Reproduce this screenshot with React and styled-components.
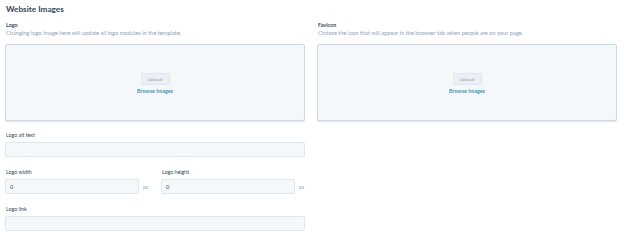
import React from "react";
import styled, { createGlobalStyle } from "styled-components";

const GlobalStyle = createGlobalStyle`
  body {
    margin: 0;
    background: #ffffff;
    font-family: Lato, "Liberation Sans", sans-serif;
    color: #33475b;
  }
`;

const Page = styled.div`
  width: 624px;
  height: 246px;
  box-sizing: border-box;
  padding: 3px 7px 0 5px;
  overflow: hidden;
`;

const Title = styled.h1`
  margin: 0 0 0 1px;
  font-size: 8.2px;
  line-height: 12px;
  font-weight: 700;
  color: #33475b;
`;

const Columns = styled.div`
  display: flex;
  gap: 12px;
  margin-top: 6px;
`;

const Column = styled.div`
  width: 300px;
  display: flex;
  flex-direction: column;
`;

const SectionLabel = styled.div`
  margin-left: 1px;
  font-size: 5.4px;
  line-height: 8px;
  font-weight: 700;
  color: #33475b;
`;

const Help = styled.div`
  margin-left: 1px;
  font-size: 5.7px;
  line-height: 8px;
  color: #8fa4b8;
`;

const Dropzone = styled.div`
  margin-top: 7px;
  height: 77px;
  box-sizing: border-box;
  border: 1px solid #cfd9e3;
  border-radius: 2px;
  background: #f5f8fa;
  box-shadow: 0 1px 1px rgba(203, 214, 226, 0.6);
  display: flex;
  flex-direction: column;
  align-items: center;
  justify-content: center;
  gap: 3px;
  padding-top: 2px;
`;

const UploadButton = styled.button`
  width: 29px;
  height: 12px;
  padding: 0;
  border: 1px solid #e1e7ee;
  border-radius: 2px;
  background: #eaf0f6;
  font-family: inherit;
  font-size: 4.6px;
  color: #8fa4b8;
`;

const BrowseLink = styled.a`
  font-size: 5.4px;
  line-height: 7px;
  font-weight: 600;
  color: #2d8ea6;
  text-decoration: none;
`;

const Field = styled.div`
  display: flex;
  flex-direction: column;
  margin-top: ${(p) => p.$top ?? 11}px;
`;

const FieldLabel = styled.label`
  display: block;
  margin-left: 1px;
  font-size: 5.3px;
  line-height: 7px;
  color: #33475b;
`;

const Input = styled.div`
  margin-top: 3px;
  width: ${(p) => p.$width || 300}px;
  height: 15px;
  box-sizing: border-box;
  border: 1px solid #dfe6ee;
  border-radius: 2px;
  background: #f5f8fa;
  padding-left: 4px;
  display: flex;
  align-items: center;
  font-size: 5.6px;
  color: #33475b;
`;

const SizeRow = styled.div`
  display: flex;
`;

const SizeCell = styled.div`
  flex: 0 0 156px;
`;

const InputWithUnit = styled.div`
  display: flex;
  align-items: flex-end;
`;

const Unit = styled.span`
  height: 15px;
  display: flex;
  align-items: center;
  margin-left: 4px;
  font-size: 5px;
  color: #8fa4b8;
`;

function ImagePicker({ label, help }) {
  return (
    <>
      <SectionLabel>{label}</SectionLabel>
      <Help>{help}</Help>
      <Dropzone>
        <UploadButton>Upload</UploadButton>
        <BrowseLink>Browse Images</BrowseLink>
      </Dropzone>
    </>
  );
}

function SizeField({ label }) {
  return (
    <SizeCell>
      <FieldLabel>{label}</FieldLabel>
      <InputWithUnit>
        <Input $width={134}>0</Input>
        <Unit>px</Unit>
      </InputWithUnit>
    </SizeCell>
  );
}

export default function App() {
  return (
    <>
      <GlobalStyle />
      <Page>
        <Title>Website Images</Title>
        <Columns>
          <Column>
            <ImagePicker
              label="Logo"
              help="Changing logo image here will update all logo modules in the template."
            />
            <Field $top={11}>
              <FieldLabel>Logo alt text</FieldLabel>
              <Input />
            </Field>
            <Field $top={12}>
              <SizeRow>
                <SizeField label="Logo width" />
                <SizeField label="Logo height" />
              </SizeRow>
            </Field>
            <Field $top={12}>
              <FieldLabel>Logo link</FieldLabel>
              <Input />
            </Field>
          </Column>
          <Column>
            <ImagePicker
              label="Favicon"
              help="Choose the icon that will appear in the browser tab when people are on your page."
            />
          </Column>
        </Columns>
      </Page>
    </>
  );
}
